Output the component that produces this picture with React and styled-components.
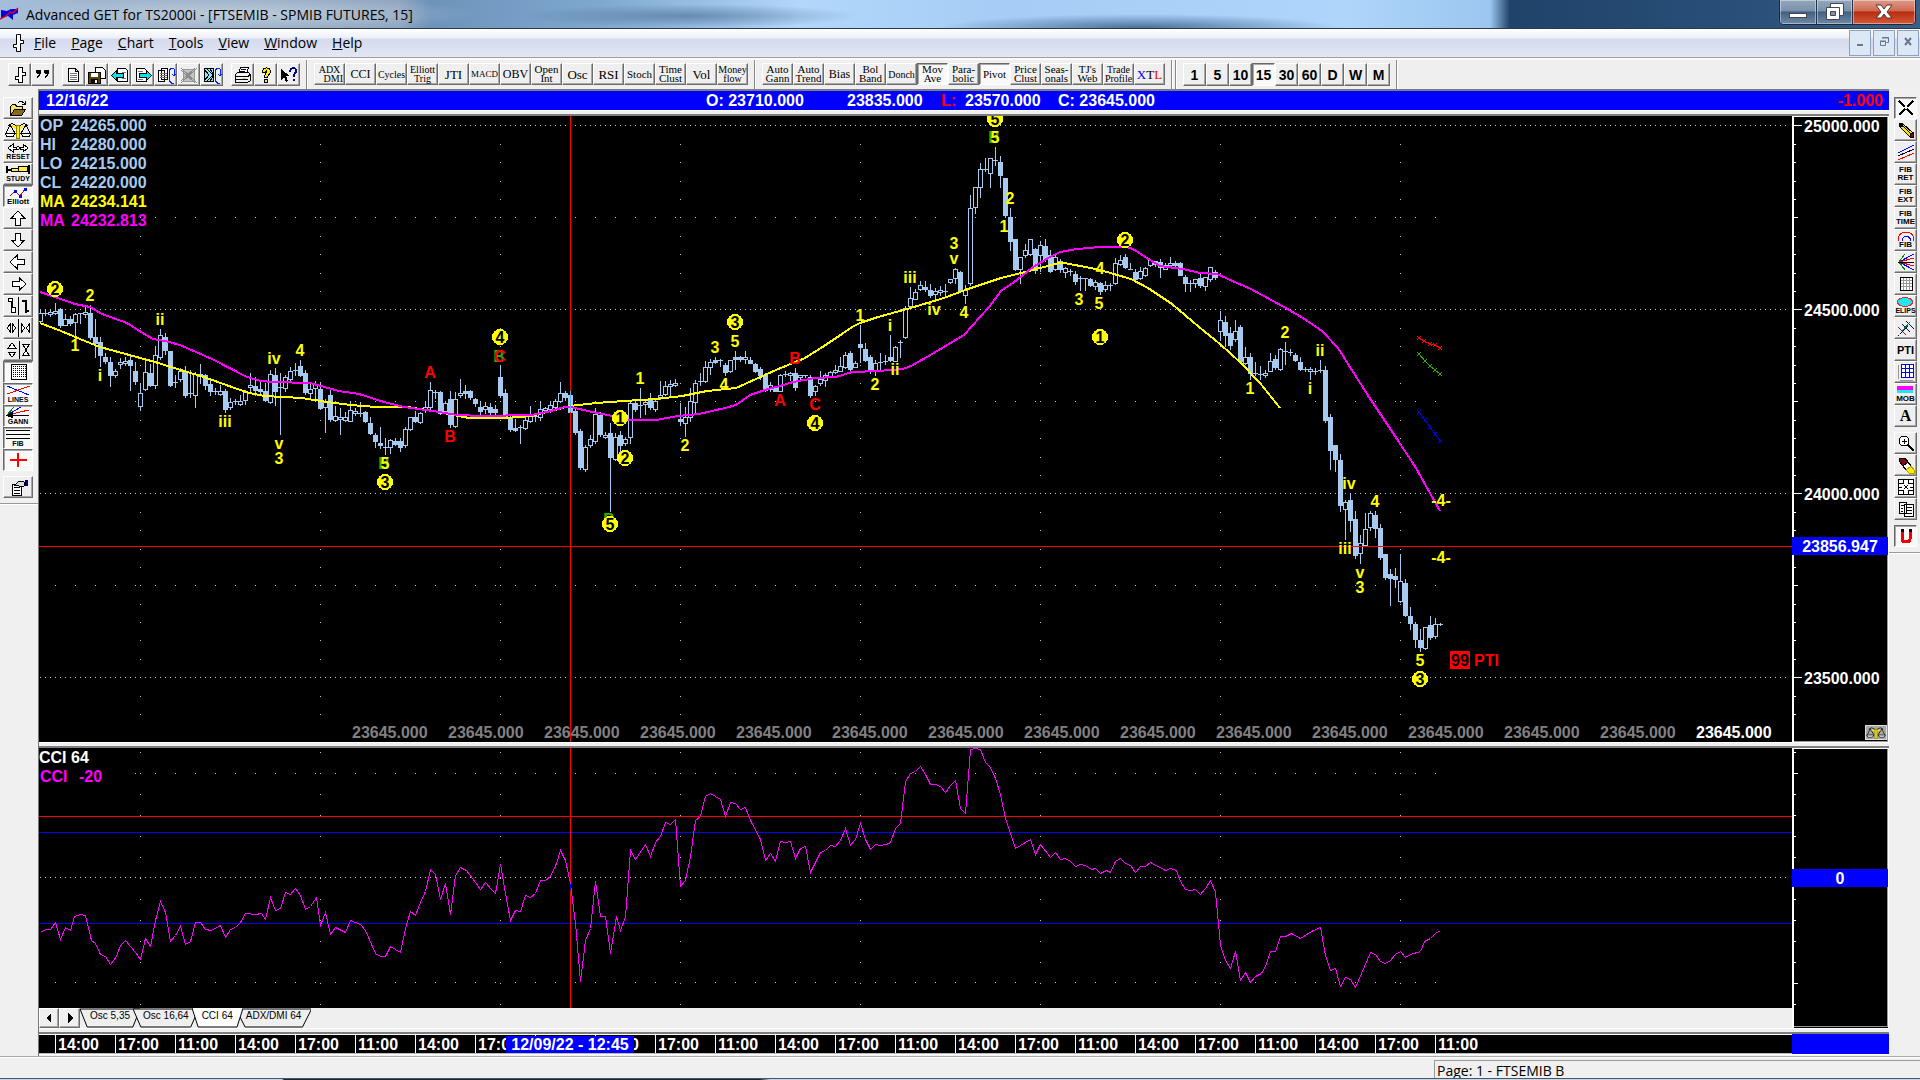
import React from "react";
import styled, { createGlobalStyle, css } from "styled-components";

const BAR_STEP = 5;
const FIRST_BAR = 40;

// [high, open, close, low] per bar, in thirds of a pixel below y = 240
const bars = [
  [208, 242, 220, 250], [210, 218, 222, 224], [210, 222, 216, 228], [188, 218, 214, 222],
  [205, 208, 256, 260], [222, 254, 236, 256], [228, 238, 250, 254], [220, 247, 222, 296],
  [218, 222, 220, 250], [202, 222, 216, 230], [196, 218, 290, 296], [238, 292, 310, 350],
  [292, 306, 346, 378], [338, 352, 362, 368], [350, 366, 406, 438], [388, 406, 392, 412],
  [354, 372, 366, 384], [352, 370, 362, 376], [346, 360, 374, 450], [366, 392, 424, 432],
  [428, 498, 458, 510], [360, 446, 396, 450], [372, 400, 434, 438], [318, 434, 346, 444],
  [268, 352, 286, 358], [280, 290, 330, 342], [332, 334, 434, 438], [404, 430, 426, 440],
  [384, 416, 394, 424], [378, 392, 466, 470], [390, 462, 458, 470], [396, 466, 402, 500],
  [372, 402, 408, 428], [402, 404, 434, 446], [414, 432, 452, 464], [444, 452, 456, 462],
  [436, 462, 454, 464], [446, 452, 506, 516], [474, 502, 486, 508], [478, 486, 484, 492],
  [466, 492, 484, 496], [450, 480, 456, 492], [400, 440, 434, 454], [412, 438, 450, 464],
  [424, 446, 454, 460], [430, 452, 480, 484], [390, 486, 402, 490], [384, 404, 454, 494],
  [400, 444, 442, 582], [404, 444, 412, 452], [380, 416, 394, 424], [368, 394, 390, 404],
  [360, 378, 404, 408], [390, 400, 456, 462], [432, 460, 446, 470], [424, 444, 432, 480],
  [426, 448, 504, 508], [476, 500, 484, 576], [450, 466, 536, 542], [498, 540, 528, 544],
  [504, 536, 530, 582], [516, 540, 532, 544], [484, 542, 510, 544], [504, 518, 512, 526],
  [486, 522, 518, 528], [512, 516, 542, 546], [530, 548, 578, 582], [580, 584, 604, 620],
  [560, 608, 616, 624], [594, 622, 620, 642], [598, 622, 600, 638], [594, 602, 612, 614],
  [594, 604, 620, 632], [560, 616, 566, 620], [530, 566, 532, 570], [512, 530, 542, 546],
  [516, 546, 518, 548], [484, 510, 500, 516], [426, 502, 450, 506], [450, 460, 456, 474],
  [452, 456, 518, 522], [482, 512, 490, 518], [452, 478, 552, 560], [456, 558, 476, 560],
  [416, 466, 460, 470], [436, 452, 458, 474], [450, 454, 472, 478], [474, 478, 490, 498],
  [484, 500, 512, 526], [486, 508, 498, 518], [488, 500, 516, 528], [494, 508, 516, 530],
  [378, 412, 466, 470], [448, 460, 528, 532], [526, 530, 566, 572], [536, 564, 570, 574],
  [554, 560, 560, 610], [532, 564, 540, 568], [498, 542, 526, 546], [524, 532, 528, 544],
  [484, 530, 506, 540], [500, 510, 504, 514], [484, 508, 496, 516], [478, 500, 482, 510],
  [426, 482, 458, 486], [452, 460, 470, 480], [450, 466, 516, 520], [505, 512, 576, 582],
  [568, 572, 682, 686], [614, 688, 622, 692], [586, 616, 598, 622], [504, 604, 522, 608],
  [516, 526, 582, 588], [576, 590, 584, 594], [548, 578, 650, 812], [578, 656, 590, 660],
  [574, 584, 616, 640], [590, 610, 596, 614], [484, 590, 488, 608], [482, 490, 506, 514],
  [444, 496, 498, 530], [482, 492, 486, 522], [460, 478, 500, 506], [474, 506, 484, 514],
  [424, 470, 466, 478], [422, 462, 438, 466], [420, 438, 432, 470], [416, 434, 430, 438],
  [488, 538, 542, 556], [500, 550, 532, 588], [444, 530, 484, 544], [420, 486, 428, 516],
  [398, 426, 424, 434], [364, 424, 380, 426], [358, 380, 366, 402], [352, 360, 366, 370],
  [358, 360, 362, 378], [370, 374, 396, 404], [360, 392, 360, 396], [334, 352, 356, 388],
  [348, 352, 358, 362], [334, 358, 352, 370], [350, 360, 368, 370], [368, 372, 392, 396],
  [382, 388, 404, 418], [400, 404, 450, 454], [426, 446, 434, 452], [438, 440, 452, 454],
  [402, 452, 406, 454], [394, 406, 402, 408], [396, 404, 400, 420], [384, 400, 440, 450],
  [404, 412, 406, 418], [404, 408, 404, 412], [406, 412, 466, 470], [434, 452, 438, 466],
  [392, 428, 418, 434], [398, 420, 406, 438], [392, 410, 396, 412], [376, 396, 390, 400],
  [350, 392, 378, 394], [336, 380, 344, 384], [334, 340, 386, 390], [362, 380, 368, 382],
  [255, 312, 322, 366], [310, 326, 360, 364], [344, 352, 386, 398], [360, 392, 368, 404],
  [340, 370, 366, 392], [346, 362, 362, 372], [286, 352, 360, 362], [318, 362, 320, 364],
  [300, 306, 308, 350], [198, 290, 204, 294], [140, 198, 174, 200], [148, 176, 156, 178],
  [123, 148, 136, 150], [124, 142, 148, 152], [132, 150, 164, 172], [144, 162, 154, 180],
  [138, 156, 150, 164], [133, 152, 153, 172], [116, 126, 118, 130], [84, 114, 86, 130],
  [94, 96, 152, 154], [136, 164, 150, 188], [-135, 130, -96, 134], [-158, -100, -158, -82],
  [-232, -160, -212, -130], [-246, -212, -212, -206], [-246, -200, -245, -158], [-280, -239, -238, -225],
  [-252, -234, -196, -160], [-187, -185, -74, -70], [-95, -69, 4, 30], [-4, -2, 86, 90],
  [50, 88, 52, 128], [12, 46, 30, 50], [-4, 42, -2, 44], [24, 26, 90, 100],
  [4, 44, 14, 94], [-2, 18, 58, 62], [30, 46, 92, 96], [38, 86, 52, 90],
  [58, 64, 88, 96], [82, 96, 84, 112], [88, 92, 96, 104], [92, 102, 124, 132],
  [108, 115, 116, 150], [113, 115, 116, 150], [114, 116, 134, 138], [120, 138, 126, 148],
  [125, 130, 152, 162], [124, 148, 136, 152], [130, 136, 136, 150], [54, 130, 70, 132],
  [46, 72, 60, 74], [42, 52, 82, 84], [68, 86, 86, 88], [88, 96, 118, 124],
  [82, 114, 92, 116], [80, 104, 84, 108], [56, 76, 60, 78], [62, 64, 72, 78],
  [58, 66, 80, 112], [70, 86, 76, 88], [52, 76, 70, 82], [64, 70, 74, 82],
  [66, 70, 104, 106], [106, 110, 130, 154], [120, 132, 130, 154], [116, 130, 118, 140],
  [102, 114, 134, 142], [110, 138, 110, 150], [82, 118, 82, 122], [90, 96, 110, 116],
  [212, 274, 240, 300], [228, 246, 286, 318], [260, 280, 314, 326], [240, 298, 274, 304],
  [256, 262, 364, 368], [322, 368, 350, 372], [340, 352, 400, 416], [365, 400, 400, 406],
  [378, 402, 402, 416], [390, 406, 400, 410], [340, 392, 362, 394], [344, 358, 382, 386],
  [324, 386, 328, 390], [306, 334, 336, 372], [328, 335, 338, 344], [340, 346, 360, 364],
  [352, 366, 386, 390], [382, 390, 386, 394], [382, 392, 388, 416], [384, 392, 395, 402],
  [360, 390, 392, 396], [378, 390, 540, 546], [522, 530, 630, 686], [615, 616, 656, 692],
  [642, 660, 794, 812], [780, 806, 786, 896], [760, 780, 840, 872], [812, 838, 944, 954],
  [884, 940, 910, 970], [820, 914, 866, 918], [812, 860, 820, 870], [812, 826, 864, 890],
  [852, 864, 952, 956], [941, 943, 1011, 1016], [986, 1003, 1013, 1095], [984, 1008, 1016, 1041],
  [942, 1082, 1024, 1086], [1017, 1028, 1124, 1127], [1101, 1129, 1148, 1166], [1146, 1151, 1196, 1221],
  [1168, 1200, 1221, 1232], [1161, 1223, 1161, 1226], [1128, 1155, 1191, 1198], [1134, 1189, 1152, 1193],
  [1150, 1153, 1153, 1156],
];

const fastAverage =
  "40,323 61,331 80,339 100,347 122,353 155,362 184,371 204,377 229,386 249,393 265,396 302,398 327,402 351,405 376,407 408,407 433,411 449,414 469,418 506,418 531,416 547,412 570,406 587,404 609,402 656,399 682,396 707,391 736,388 756,379 776,370 805,358 821,348 842,334 852,327 860,323 878,317 907,309 944,298 968,289 1001,278 1029,271 1059,263 1064,263 1091,268 1107,272 1131,279 1148,288 1172,304 1199,327 1220,344 1241,363 1260,383 1280,408";

const slowAverage =
  "40,292 55,297 75,304 90,307 102,314 127,323 141,332 153,339 165,341 180,345 212,359 247,377 261,381 273,382 310,383 339,391 359,394 384,402 404,407 433,411 457,415 482,416 531,415 547,412 565,407 571,407 592,412 608,415 629,420 656,420 678,416 699,414 725,408 736,405 750,395 768,389 780,386 793,382 815,378 836,377 852,372 878,371 903,369 911,366 927,357 964,335 972,326 989,307 1001,291 1017,280 1033,267 1050,257 1060,252 1077,249 1100,247 1127,247 1133,249 1150,260 1160,266 1183,269 1200,273 1217,274 1237,283 1251,289 1284,307 1303,318 1322,331 1338,348 1350,367 1369,397 1397,439 1416,468 1440,511";

const Y = "#ffff00";
const R = "#ff0000";
const G = "#2fae00";

// wave counts: [text, x, y, colour]
const waves = [
  ["2", 90, 295, Y], ["1", 75, 345, Y], ["i", 100, 375, Y], ["ii", 160, 319, Y],
  ["iii", 225, 421, Y], ["iv", 274, 358, Y], ["4", 300, 350, Y], ["v", 279, 443, Y],
  ["3", 279, 458, Y], ["B", 384, 463, G], ["5", 385, 463, Y], ["A", 430, 372, R],
  ["B", 450, 436, R], ["B", 499, 356, G], ["C", 500, 356, R], ["B", 609, 519, G],
  ["1", 640, 378, Y], ["2", 685, 445, Y], ["3", 715, 347, Y], ["4", 724, 384, Y],
  ["5", 735, 341, Y], ["A", 780, 400, R], ["B", 795, 358, R], ["C", 815, 404, R],
  ["1", 860, 315, Y], ["2", 875, 384, Y], ["i", 890, 325, Y], ["ii", 895, 369, Y],
  ["iii", 910, 277, Y], ["iv", 934, 309, Y], ["3", 954, 243, Y], ["v", 954, 258, Y],
  ["4", 964, 312, Y], ["B", 994, 137, G], ["5", 995, 137, Y], ["2", 1010, 198, Y],
  ["1", 1004, 226, Y], ["4", 1100, 268, Y], ["3", 1079, 299, Y], ["5", 1099, 303, Y],
  ["1", 1250, 388, Y], ["2", 1285, 332, Y], ["i", 1310, 388, Y], ["ii", 1320, 350, Y],
  ["iv", 1349, 483, Y], ["4", 1375, 501, Y], ["iii", 1345, 548, Y], ["v", 1360, 572, Y],
  ["3", 1360, 587, Y], ["-4-", 1441, 500, Y], ["-4-", 1441, 557, Y], ["5", 1420, 660, Y],
];

const majorWaves = [
  ["2", 55, 289], ["3", 385, 482], ["4", 500, 337], ["5", 610, 524], ["1", 620, 418],
  ["2", 625, 458], ["3", 735, 322], ["4", 815, 423], ["5", 995, 119], ["2", 1125, 240],
  ["1", 1100, 337], ["3", 1420, 679],
];

// oscillator line, each stretch with its own origin and units per pixel
const cci = [
  {
    x: 0, y: 720, sx: 2.24, sy: 3,
    points: [
      93, 635, 104, 629, 114, 627, 125, 607, 136, 658, 147, 623, 159, 632, 168, 588, 180, 583, 191, 587, 204, 660,
      214, 670, 226, 703, 237, 708, 248, 734, 260, 708, 271, 676, 281, 661, 303, 696, 315, 718, 326, 655, 337, 678,
      348, 600, 360, 544, 371, 578, 383, 663, 394, 645, 405, 619, 416, 672, 427, 665, 439, 607, 449, 607, 461, 628,
      474, 632, 494, 617, 506, 652, 516, 627, 528, 622, 539, 607, 550, 580, 573, 583, 585, 581, 595, 598, 607, 532,
      618, 571, 629, 565, 640, 517, 651, 523, 662, 506, 674, 525, 685, 568, 696, 558, 708, 533, 718, 615, 729, 578,
      741, 642, 752, 622, 774, 637, 785, 600, 808, 613, 819, 630, 841, 700, 852, 709, 864, 709, 875, 680, 897, 696,
      908, 625, 920, 575, 931, 585, 942, 546, 953, 513, 965, 449, 976, 464, 987, 538, 999, 490, 1010, 583,
      1020, 466, 1032, 441, 1044, 450, 1066, 488, 1077, 508, 1088, 487, 1100, 508, 1110, 520, 1121, 433,
      1132, 520, 1144, 602, 1155, 570, 1166, 574, 1177, 526, 1189, 532, 1200, 520, 1211, 482, 1223, 481,
      1234, 470, 1246, 430, 1256, 390, 1267, 420, 1278, 490, 1290, 610, 1301, 785, 1312, 660, 1323, 625,
      1334, 485, 1346, 588, 1357, 588, 1368, 700, 1380, 588, 1391, 632, 1401, 588, 1412, 390, 1424, 418,
      1446, 374, 1457, 409, 1468, 368, 1480, 350, 1491, 308, 1503, 313, 1513, 298, 1524, 498, 1536, 480,
      1547, 410, 1558, 302,
    ],
  },
  {
    x: 700, y: 720, sx: 2.529, sy: 3,
    points: [
      2, 288, 14, 228, 26, 221, 40, 228, 53, 237, 65, 288, 78, 247, 90, 251, 103, 268, 115, 263, 128, 300, 152, 357,
      166, 422, 179, 401, 191, 423, 203, 364, 215, 368, 229, 364, 242, 415, 254, 385, 267, 379, 280, 457, 305, 397,
      318, 390, 331, 377, 343, 380, 356, 360, 369, 325, 381, 376, 394, 357, 406, 311, 419, 358, 432, 387, 445, 374,
      457, 377, 471, 374, 482, 367, 495, 325, 507, 311, 519, 185, 532, 160, 546, 153, 558, 139, 570, 162, 582, 193,
      596, 193, 608, 200, 621, 217, 634, 196, 646, 182, 658, 264, 672, 281, 684, 88, 697, 86, 710, 89, 722, 128,
      735, 143, 747, 175, 760, 222, 773, 296, 798, 386, 811, 375, 836, 359, 849, 403, 861, 372, 886, 412, 900, 398,
      912, 418, 924, 415, 937, 423, 950, 440, 963, 433, 975, 436, 989, 448, 1000, 446, 1013, 460, 1027, 451,
      1038, 458, 1051, 423, 1064, 415, 1076, 430, 1089, 437, 1102, 458, 1114, 440, 1126, 439, 1140, 428,
      1178, 452, 1191, 444, 1204, 452, 1216, 485, 1228, 508, 1240, 512, 1253, 509, 1267, 523, 1279, 504,
      1291, 482, 1304, 517, 1311, 610, 1317, 675, 1329, 720, 1342, 745, 1354, 694, 1368, 782, 1380, 757,
      1392, 787, 1405, 768, 1419, 760, 1431, 740, 1443, 695, 1456, 693, 1468, 650, 1480, 649,
    ],
  },
  {
    x: 1280, y: 520, sx: 2.45, sy: 2.8,
    points: [
      27, 1157, 50, 1171, 78, 1153, 99, 1142, 111, 1220, 124, 1262, 136, 1255, 149, 1306, 160, 1280, 173, 1287,
      185, 1308, 222, 1211, 234, 1216, 246, 1235, 258, 1242, 270, 1232, 283, 1216, 295, 1209, 307, 1224, 319, 1217,
      343, 1207, 355, 1179, 368, 1173, 380, 1158, 393, 1149,
    ],
  },
];

const cciLine = cci
  .map(({ x, y, sx, sy, points }) => {
    const out = [];
    for (let i = 0; i < points.length; i += 2) {
      out.push(`${Math.floor(x + points[i] / sx) + 0.5},${Math.floor(y + points[i + 1] / sy) + 0.5}`);
    }
    return out.join(" ");
  })
  .join(" ");

const range = (n) => Array.from({ length: n }, (_, i) => i);
const priceTick = (k) => Math.round(125.3 + k * 18.4);
const cciTick = (k) => 752 + k * 21;
const sessions = range(8).map((i) => 140 + i * 180);
const hours = ["14:00", "17:00", "11:00"];

const GlobalStyle = createGlobalStyle`
  body {
    margin: 0;
    background: #f0f0f0;
    font-family: "Liberation Sans", Arial, sans-serif;
    overflow: hidden;
  }
  button {
    font: inherit;
    color: #000;
  }
`;

const Window = styled.div`
  display: flex;
  flex-direction: column;
  min-height: 100vh;
`;

const TitleBar = styled.header`
  display: flex;
  align-items: flex-start;
  height: 28px;
  border-bottom: 1px solid #2a3a4c;
  background:
    radial-gradient(ellipse 170px 12px at 690px 16px, rgba(66, 98, 132, 0.55), transparent),
    radial-gradient(ellipse 200px 14px at 1140px 28px, rgba(40, 80, 124, 0.75), transparent),
    radial-gradient(ellipse 240px 18px at 240px 14px, rgba(214, 224, 234, 0.6), transparent),
    linear-gradient(90deg, #a4bedb 0, #9db4cc 100px, #8fa6bf 400px, #6d93ba 430px, #7fa8d0 600px, #b2d7fb 800px,
      #a5cdf5 1000px, #aed5fa 1350px, #9cc6f0 1490px, #1f4369 1510px, #2a507a 1750px, #3b6086 100%);
`;

const AppIcon = styled.svg`
  width: 20px;
  height: 20px;
  margin-top: 4px;
`;

const Title = styled.h1`
  flex: 1;
  margin: 0 0 0 6px;
  font: 400 14px/29px "Open Sans", "Noto Sans", sans-serif;
  white-space: nowrap;
`;

const WindowButtons = styled.div`
  display: flex;
  height: 24px;
  margin-right: 4px;
  border: 1px solid #1b2a3a;
  border-top: 0;
  border-radius: 0 0 5px 5px;
  overflow: hidden;
`;

const WindowButton = styled.button`
  width: ${(p) => p.$width}px;
  padding: 0;
  border: 0;
  border-right: 1px solid #22344a;
  box-shadow: inset 0 0 0 1px rgba(255, 255, 255, 0.4);
  background: ${(p) =>
    p.$close
      ? "linear-gradient(#dc9a8a 0, #cf6a50 45%, #b82c10 50%, #d4593a 100%)"
      : "linear-gradient(#93a7bc 0, #7b92aa 45%, #43607f 50%, #6f8aa6 100%)"};
  &:last-child {
    border-right: 0;
  }
`;

const MenuBar = styled.nav`
  display: flex;
  align-items: center;
  height: 29px;
  padding-left: 10px;
  border-bottom: 1px solid #a0a0a0;
  box-sizing: border-box;
  background: linear-gradient(#ffffff 0, #eef0f8 9px, #d4daed 10px, #e3e8f5 100%);
`;

const MenuButton = styled.button`
  margin-right: 15px;
  padding: 0;
  border: 0;
  background: none;
  font: 400 14px/28px "Open Sans", "Noto Sans", sans-serif;
  &::first-letter {
    text-decoration: underline;
  }
`;

const MenuIcon = styled.svg`
  width: 16px;
  height: 20px;
  margin-right: 8px;
`;

const DocumentButtons = styled.div`
  display: flex;
  gap: 2px;
  margin: 0 1px 0 auto;
`;

const DocumentButton = styled.button`
  width: 22px;
  height: 26px;
  padding: 0;
  border: 1px solid #8ea2bd;
  background: #dce8f6;
`;

const Toolbars = styled.div`
  display: flex;
  align-items: flex-start;
  height: 31px;
  box-sizing: border-box;
  padding: 3px 0 0 8px;
  border-top: 2px solid #fafafa;
  background: #efefef;
`;

const ButtonGroup = styled.div`
  display: flex;
  margin-right: ${(p) => p.$after || 8}px;
`;

const Divider = styled.span`
  width: 1px;
  height: 29px;
  margin: -3px ${(p) => p.$after || 6}px 0 0;
  border-left: 1px solid #888;
  background: #fff;
`;

const raised = css`
  border: 1px solid;
  border-color: #fff #6d6d6d #6d6d6d #fff;
  box-shadow: inset -1px -1px #a8a8a8;
  background: #efefef;
`;

const sunken = css`
  border: 1px solid;
  border-color: #696969 #fff #fff #696969;
  box-shadow: inset 1px 1px #a8a8a8;
  background: #f9f9f9;
`;

const ToolButton = styled.button`
  display: flex;
  align-items: center;
  justify-content: center;
  width: ${(p) => p.$width || 23}px;
  height: ${(p) => p.$height || 23}px;
  padding: 0;
  box-sizing: border-box;
  overflow: hidden;
  ${(p) => (p.$pressed ? sunken : raised)}
  svg {
    flex: none;
    shape-rendering: crispEdges;
  }
`;

const StudyText = styled.span`
  font-family: "Liberation Serif", "Times New Roman", serif;
  font-size: ${(p) => p.$size}px;
  line-height: 9px;
  text-align: center;
  white-space: pre;
`;

const PlainText = styled.span`
  font-size: ${(p) => p.$size}px;
  font-weight: ${(p) => (p.$bold ? 700 : 400)};
  line-height: 8px;
  text-align: center;
  white-space: pre;
`;

const Tint = styled.span`
  color: ${(p) => p.$color};
`;

const Workspace = styled.main`
  display: flex;
  flex: 1;
`;

const SideTools = styled.aside`
  display: flex;
  flex: none;
  flex-direction: column;
  box-sizing: border-box;
  width: ${(p) => p.$width}px;
  padding: 8px 0 0 ${(p) => p.$inset}px;
`;

const SideGroup = styled.div`
  display: flex;
  flex-direction: column;
  margin-bottom: 5px;
`;

const SideEnd = styled.div`
  height: 1px;
  margin-left: -5px;
  border-top: 1px solid #999;
  background: #fff;
`;

const Charts = styled.section`
  display: flex;
  flex: 1;
  flex-direction: column;
  min-width: 0;
  border-left: 1px solid #777;
`;

const Pane = styled.div`
  display: flex;
  margin-bottom: ${(p) => (p.$last ? 2 : 4)}px;
  border-top: 2px solid #7d7d7d;
  box-shadow: 0 1px #fff;
`;

const QuoteBar = styled.div`
  display: grid;
  flex: 1;
  grid-template-columns: 660px 141px 94px 117px 1fr auto;
  height: 19px;
  padding: 0 6px 0 7px;
  background: #0000ff;
  color: #fff;
  font: 700 16px/19px "Liberation Sans", Arial, sans-serif;
`;

const QuoteValue = styled.span`
  white-space: pre;
`;

const PlotColumn = styled.div`
  flex: 1;
  min-width: 0;
`;

const Plot = styled.svg`
  display: block;
  width: 100%;
  height: ${(p) => p.$height}px;
  background: #000;
  font: 700 16px "Liberation Sans", Arial, sans-serif;
  shape-rendering: crispEdges;
`;

const Axis = styled.div`
  position: relative;
  flex: none;
  width: 97px;
  box-sizing: border-box;
  border-right: 1px solid #fff;
  background: #000;
`;

const AxisBadge = styled.output`
  position: absolute;
  top: ${(p) => p.$top}px;
  left: 0;
  right: 0;
  height: 18px;
  background: #0000ff;
  color: #fff;
  font: 700 16px/19px "Liberation Sans", Arial, sans-serif;
  text-align: center;
`;

const ScaleButton = styled.button`
  position: absolute;
  right: 1px;
  bottom: 2px;
  width: 22px;
  height: 15px;
  padding: 0;
  border: 1px solid #ddd;
  background: #a8a8a8;
  svg {
    display: block;
  }
`;

const TabStrip = styled.div`
  display: flex;
  height: 20px;
  background: #efefef;
`;

const Tab = styled.button`
  position: relative;
  z-index: ${(p) => (p.$active ? 1 : 0)};
  height: 20px;
  margin-right: -7px;
  padding: 0 10px 5px;
  border: 0;
  background: none;
  font-size: 10px;
  line-height: 14px;
  white-space: nowrap;
  svg {
    position: absolute;
    inset: 0;
    z-index: -1;
    width: 100%;
    height: 100%;
  }
`;

const TimeAxis = styled.div`
  position: relative;
  display: flex;
  flex: 1;
  min-width: 0;
  height: 20px;
  box-sizing: border-box;
  padding-left: 16px;
  border-top: 1px solid #fff;
  border-bottom: 1px solid #bbb;
  background: #000;
  overflow: hidden;
`;

const Hour = styled.span`
  flex: none;
  width: 60px;
  box-sizing: border-box;
  padding-left: 2px;
  border-left: 1px solid #fff;
  color: #fff;
  font: 700 16px/20px "Liberation Sans", Arial, sans-serif;
`;

const CursorTime = styled.output`
  position: absolute;
  left: 467px;
  top: 1px;
  width: 128px;
  background: #0000ff;
  color: #fff;
  font: 700 16px/18px "Liberation Sans", Arial, sans-serif;
  text-align: center;
`;

const Corner = styled.div`
  flex: none;
  width: 97px;
  background: #0000ff;
`;

const StatusBar = styled.footer`
  display: flex;
  height: 22px;
  box-sizing: border-box;
  padding-top: 3px;
  border-top: 1px solid #a8a8a8;
  box-shadow: inset 0 1px #fff;
`;

const StatusCell = styled.span`
  width: 486px;
  margin-left: auto;
  padding-left: 2px;
  border-left: 1px solid #999;
  border-top: 1px solid #999;
  box-sizing: border-box;
  font: 400 14px/20px "Open Sans", "Noto Sans", sans-serif;
`;

const TaskEdge = styled.div`
  height: 2px;
  background: linear-gradient(90deg, #c6d8e8 0, #c6d8e8 282px, #1b2530 284px, #1b2530 760px, #c6d8e8 770px);
  border-top: 1px solid #43586d;
  box-sizing: border-box;
`;

const Stack = styled.span`
  display: flex;
  flex-direction: column;
  align-items: center;
`;

const Letter = styled.span`
  font: 700 16px/18px "Liberation Serif", "Times New Roman", serif;
`;

const Icon = ({ w = 20, h = 18, children }) => (
  <svg width={w} height={h} viewBox={`0 0 ${w} ${h}`} fill="none" stroke="#000" aria-hidden="true">
    {children}
  </svg>
);

const icons = {
  bar: <path d="M9.500 1.500h3v5h3v3h-3v7h-4v-3h-3v-3h3v-9z" fill="#fff" />,
  quotes: (
    <path
      d="M3 6a2.500 2.500 0 1 1 5 0c0 3-2 5-4 6v-1c1-1 2-2 2-3a2.500 2.500 0 0 1-3-2zM11 6a2.500 2.500 0 1 1 5 0c0 3-2 5-4 6v-1c1-1 2-2 2-3a2.500 2.500 0 0 1-3-2z"
      fill="#000"
      stroke="none"
    />
  ),
  page: (
    <>
      <path d="M4.500 2.500h7l3 3v10h-10z M11.500 2.500v3h3" fill="#fff" />
      <path d="M6 7.500h7M6 9.500h7M6 11.500h7M6 13.500h7" stroke="#777" />
    </>
  ),
  save: (
    <>
      <path d="M8.500 1.500h7l3 3v8h-10z" fill="#fff" />
      <path d="M1.500 6.500h12v11h-12z" fill="#5a4300" />
      <path d="M4 7h7v4H4z" fill="#fff" stroke="none" />
      <path d="M4 13h7v4H4z" fill="#000" stroke="none" />
      <path d="M8 14h2v3H8z" fill="#fff" stroke="none" />
    </>
  ),
  prev: (
    <>
      <path d="M7.500 2.500h8l2 2v11h-10z" fill="#fff" />
      <path d="M12 6.500h4M12 12.500h4" stroke="#777" />
      <path d="M1.500 9.500l5-5v3h7v4h-7v3z" fill="#00e5ee" />
    </>
  ),
  next: (
    <>
      <path d="M3.500 2.500h8l2 2v11h-10z" fill="#fff" />
      <path d="M5 5.500h5M5 13.500h5" stroke="#777" />
      <path d="M18.500 9.500l-5-5v3h-7v4h7v3z" fill="#00e5ee" />
    </>
  ),
  cycle: (
    <>
      <path d="M2.500 4.500h6v11h-6zM5.500 2.500h6v11h-6z" fill="#fff" />
      <path d="M4 7.500h7M4 9.500h7M4 11.500h7" stroke="#777" />
      <path d="M13.500 15V4l2-2h2l1 2v5M16 8l2 2 2-2M13.500 15l2 2h2" stroke="#0022ee" />
    </>
  ),
  remove: (
    <>
      <path d="M4.500 3.500h11v12h-11z" stroke="#999" fill="#c4c4c4" />
      <path d="M2 2l16 15M18 2L2 17M2 4l14 13M16 2L2 15" stroke="#8c8c8c" />
    </>
  ),
  cycleAll: (
    <>
      <path d="M2.500 2.500h9v13h-9z" fill="#90e8f0" />
      <path d="M2 3l5 6-5 6M5 3l6 6-6 6M8 3l4 6-4 6" />
      <path d="M13.500 15V4l2-2h2l1 2v5M16 8l2 2 2-2M13.500 15l2 2h2" stroke="#0022ee" />
    </>
  ),
  print: (
    <>
      <path d="M5.500 7.500l2-6h8l-2 6z" fill="#fff" />
      <path d="M8 3.500h5M7 5.500h5" />
      <path d="M2.500 8.500l2-2h11l2 2v6l-3 2h-12z" fill="#f2f2f2" />
      <path d="M3 10.500h12M3 13.500h12M15 10.500l2-2" />
      <path d="M10 12h3" stroke="#e0d000" />
    </>
  ),
  help: (
    <>
      <path d="M6.500 6.500c-1-6 8-6 8-1 0 3-3 3-3 6h-3c0-4 2-4 2-6 0-1-1-1-1 1z" fill="#ffee00" />
      <path d="M8.500 13.500h3v3h-3z" fill="#ffee00" />
    </>
  ),
  pointer: (
    <>
      <path d="M2 3v11l3-3 2 5 2-1-2-5h4z" fill="#000" stroke="none" />
      <path d="M11.500 6c-1-5 6-5 6-1 0 2-3 2-3 6M14.500 13v2" stroke="#00008b" strokeWidth="2" />
    </>
  ),
};

const sideIcons = {
  open: (
    <>
      <path d="M4.500 16.500v-9l2-2h3l1 2h6v3" fill="#f4e36a" />
      <path d="M4.500 16.500l4-6h11l-4 6z" fill="#8a6a1c" />
      <path d="M12 4c3-3 5-1 7 1M19 2v3h-3" />
    </>
  ),
  scales: (
    <>
      <path d="M3 4.500l4-2 6 3 6-3 4 2" />
      <path d="M5 4l-4 8M5 4l5 8M21 4l-5 8M21 4l4 8M0 12.500h10l-2 3H2zM16 12.500h10l-2 3h-6z" fill="#fff" />
      <path d="M7 5l6 3 6-3" stroke="#ffee00" strokeWidth="2" />
      <path d="M11.500 4.500h3v13h-3z" fill="#ffee00" stroke="#8a8000" />
    </>
  ),
  reset: <path d="M2 5l5-4v3h3v2H7v3zM22 5l-5-4v3h-3v2h3v3zM10 5l2-2 2 2-2 2z" fill="#fff" />,
  study: (
    <>
      <path d="M1 1v7M1 4.500h7M23 0v9" strokeWidth="2" />
      <path d="M5.500 3.500h7v3h-7zM12.500 1.500h9v5h-9z" fill="#ffee44" />
    </>
  ),
  elliott: (
    <>
      <path d="M4 9l5-5 5 5 6-8" stroke="#e00000" />
      <path d="M8 3h2v2H8zM13 8h2v2h-2zM18 1h2v2h-2z" fill="#0000ff" stroke="#0000ff" />
    </>
  ),
  up: <path d="M12 2l6.500 7h-4v7h-5V9h-4z" fill="#fff" />,
  down: <path d="M12 16l6.500-7h-4V2h-5v7h-4z" fill="#fff" />,
  left: <path d="M4 9l7-6.500v4h7v5h-7v4z" fill="#fff" />,
  right: <path d="M20 9l-7-6.500v4H6v5h7v4z" fill="#fff" />,
  space: (
    <>
      <path d="M2.500 3.500v-2h4v9h3v5h-4v-11h-3zM12.500 0v18" fill="#fff" />
      <path d="M19.500 3v13M16 4h3M20 14h3" strokeWidth="2" />
    </>
  ),
  narrow: <path d="M1 9l3.500-4v8zM10 9L6.500 5v8zM12.500 0v18M15.500 5v8l3.500-4zM23.500 5v8L20 9z" fill="#fff" />,
  shorten: (
    <path d="M2 7l4-5 4 5zM2 11l4 5 4-5zM13.500 0v18M16.500 3.500h7l-3.500 5zM16.500 14.500h7l-3.500-5z" fill="#fff" />
  ),
  grid: (
    <>
      <path d="M5.500 1.500h15v15h-15z" fill="#fff" />
      {range(6).map((i) => (
        <path key={i} d={`M7 ${3.5 + i * 2}h13`} strokeDasharray="1 1" />
      ))}
    </>
  ),
  lines: (
    <>
      <path d="M1 9L24 1" stroke="#ff0000" />
      <path d="M1 1l22 9" stroke="#0000ff" />
    </>
  ),
  gann: (
    <>
      <path d="M1 9L8 1" stroke="#008000" />
      <path d="M1 9l14-8" stroke="#0000ff" />
      <path d="M1 9l22-5" stroke="#ff0000" />
      <path d="M1 9.500h22M1 9.500l5-3v5z" fill="#000" />
    </>
  ),
  fib: <path d="M0 1.500h24M0 5.500h24M0 9.500h24" />,
  cross: <path d="M12 2v14M4 9h17" stroke="#ff0000" strokeWidth="2" />,
  props: (
    <>
      <path d="M6.500 6.500h9v11h-9z" fill="#fff" />
      <path d="M8 9.500h6M8 12.500h6M8 15.500h6" />
      <path d="M9 7l4-4 5 1v4l-4 1-2-2z" fill="#ddd" />
      <path d="M20 2v6" stroke="#00008b" strokeWidth="3" />
    </>
  ),
};

const rightIcons = {
  cross: <path d="M2 2l6 6M10 10l6 6M16 2l-6 6M8 10l-6 6" strokeWidth="2" />,
  pencil: (
    <>
      <path d="M2 2l3 0 11 10-3 4L2 5z" fill="#ffe600" />
      <path d="M2 2h3v3H2z" fill="#000" />
      <path d="M13 13l3-1v4h-3z" fill="#a00000" />
      <path d="M5 4l9 9" />
    </>
  ),
  channel: (
    <>
      <path d="M1 10L17 2" stroke="#0000ff" />
      <path d="M1 13L17 6" />
      <path d="M1 17l16-7" stroke="#ff0000" />
    </>
  ),
  arcs: (
    <>
      <path d="M3 13C-2 4 5 1 9 1s11 3 6 12" stroke="#ff0000" />
      <path d="M5 10c0-6 8-6 9 0" stroke="#0000ff" />
    </>
  ),
  fan: (
    <>
      <path d="M2 9L8 1M2 9l6 8" stroke="#008000" />
      <path d="M2 9L17 1M2 9l15 8" stroke="#0000ff" />
      <path d="M2 9l15-4M2 9l15 4" stroke="#ff0000" />
      <path d="M1 9.500h16" />
    </>
  ),
  grid: (
    <>
      <path d="M3.500 2.500h12v13h-12z" fill="#fff" />
      <path d="M6.500 3v12M9.500 3v12M12.500 3v12M4 5.500h11M4 8.500h11M4 11.500h11" stroke="#999" />
    </>
  ),
  ellipse: <ellipse cx="9" cy="5" rx="7.500" ry="4.500" fill="#22e6f0" stroke="#e03030" />,
  pitchfork: (
    <>
      <path d="M5 5l8 8M9 2l8 8" stroke="#00007b" />
      <path d="M1 8l8 8" stroke="#8b1a1a" />
      <path d="M5 12l8-9" stroke="#008000" />
      <path d="M1 17L12 6" stroke="#00007b" strokeDasharray="2 1" />
    </>
  ),
  table: (
    <>
      <path d="M4.500 1.500h12v13h-12zM8.500 2v12M12.500 2v12M5 5.500h11M5 9.500h11" fill="#fff" stroke="#0000ff" />
      <path d="M1.500 2v14M3 17.500h13" stroke="#999" />
    </>
  ),
  zoom: (
    <>
      <circle cx="7" cy="7" r="5" fill="#fff" />
      <path d="M4.500 7h5M7 4.500v5" />
      <path d="M11 11l6 6" strokeWidth="2" />
    </>
  ),
  eraser: (
    <>
      <path d="M3 2h5l3 4-5 4-4-5z" fill="#7a1010" />
      <path d="M11 6l3 4-5 4-3-4z" fill="#fff" />
      <path d="M14 10l3 4v3h-5l-3-3z" fill="#ffee00" stroke="#aaa000" />
    </>
  ),
  shrink: (
    <path
      d="M1.500 1.500h15v15h-15zM2 5l4 1 1-4M16 5l-4 1-1-4M2 13l4-1 1 4M16 13l-4-1-1 4M7 7l4 4M11 7l-4 4M2 9h3M13 9h3"
      fill="#fff"
    />
  ),
  copy: (
    <path
      d="M2.500 2.500h7v11h-7zM7.500 4.500h9v12h-9zM9 8l3-1 3 1M9 11l3-1 3 1M9 14l3-1 3 1M4 5h3M4 8h2M4 11h2"
      fill="#fff"
    />
  ),
  magnet: (
    <>
      <path d="M5 5v7c0 4 8 4 8 0V5" stroke="#f00000" strokeWidth="3" />
      <path d="M5 2v3M13 2v3" strokeWidth="3" />
    </>
  ),
};

const studies = [
  ["ADX\n   DMI", 10], ["CCI", 12], ["Cycles", 10], ["Elliott\nTrig", 10], ["JTI", 13], ["MACD", 9], ["OBV", 12],
  ["Open\nInt", 11], ["Osc", 13], ["RSI", 13], ["Stoch", 11], ["Time\nClust", 11], ["Vol", 13], ["Money\nflow", 10],
];

const tools = [
  ["Auto\nGann", 11], ["Auto\nTrend", 11], ["Bias", 12], ["Bol\nBand", 11], ["Donch", 10], ["Mov\nAve", 11, true],
  ["Para-\nbolic", 11], ["Pivot", 11, true], ["Price\nClust", 11], ["Seas-\nonals", 11], ["TJ's\nWeb", 11],
  ["Trade\nProfile", 10],
];

const periods = ["1", "5", "10", "15", "30", "60", "D", "W", "M"];

const IconButtons = ({ names, after }) => (
  <ButtonGroup $after={after}>
    {names.map((name) => (
      <ToolButton key={name} aria-label={name}>
        <Icon>{icons[name]}</Icon>
      </ToolButton>
    ))}
  </ButtonGroup>
);

const StudyButtons = ({ items, children }) => (
  <ButtonGroup $after={6}>
    {items.map(([label, size, pressed]) => (
      <ToolButton key={label} $width={31} $height={22} $pressed={pressed}>
        <StudyText $size={size}>{label}</StudyText>
      </ToolButton>
    ))}
    {children}
  </ButtonGroup>
);

const SideButton = ({ icon, set, label, size = 8, bold = true, h = 18, w = 25, pressed, width = 30 }) => (
  <ToolButton $width={width} $height={22} $pressed={pressed} aria-label={icon || label}>
    <Stack>
      {icon && <Icon w={w} h={h}>{set[icon]}</Icon>}
      {label && <PlainText $size={size} $bold={bold}>{label}</PlainText>}
    </Stack>
  </ToolButton>
);

const Candle = ({ bar, x }) => {
  const [high, open, close, low] = bar.map((v) => 240 + Math.round(v / 3));
  const top = Math.min(open, close);
  const size = Math.abs(close - open);
  const color = "#a6caf0";
  return (
    <g>
      <path d={`M${x + 0.5} ${high}V${low + 1}`} stroke={color} />
      {size < 2 ? (
        <path d={`M${x - 2} ${top + 0.5}h5`} stroke={color} />
      ) : (
        <rect x={x - 1.5} y={top + 0.5} width="4" height={size} stroke={color} fill={close > open ? color : "#000"} />
      )}
    </g>
  );
};

const Projection = ({ points, color }) => (
  <g stroke={color} fill="none">
    <polyline points={points.map((p) => p.join(",")).join(" ")} />
    {points.map(([x, y]) => (
      <path key={x} d={`M${x - 2} ${y - 2}l4 4M${x + 2} ${y - 2}l-4 4`} />
    ))}
  </g>
);

const PriceChart = () => (
  <Plot $height={626} role="img" aria-label="Price chart">
    <g transform="translate(-39 -116)">
      {[0, 10, 20, 30].map((k) => (
        <path key={k} d={`M${k ? 40 : 155} ${priceTick(k) + 0.5}H1788`} stroke="#c0c0c0" strokeDasharray="1 4" />
      ))}
      {[5, 15, 25].map((k) => (
        <path key={k} d={`M${k === 5 ? 155 : 55} ${priceTick(k) + 0.5}H1440`} stroke="#c0c0c0" strokeDasharray="1 19" />
      ))}
      {sessions.map((x) =>
        range(32).map((k) =>
          x < 150 && k < 4 ? null : (
            <rect key={x + "-" + k} x={x} y={priceTick(k + 1)} width="1" height="1" fill="#c0c0c0" />
          )
        )
      )}
      {bars.map((bar, i) => (
        <Candle key={i} bar={bar} x={FIRST_BAR + i * BAR_STEP} />
      ))}
      <polyline points={fastAverage} fill="none" stroke={Y} strokeWidth="2" />
      <polyline points={slowAverage} fill="none" stroke="#ff00ff" strokeWidth="2" />
      <path d="M570.500 116V742M39 546.500H2400" stroke={R} />
      <path d="M570.500 391V412" stroke="#58b0ff" />
      <Projection color={R} points={[[1419, 338], [1424, 341], [1430, 344], [1435, 345], [1440, 348]]} />
      <Projection color={G} points={[[1419, 354], [1425, 361], [1430, 366], [1435, 370], [1440, 374]]} />
      <Projection color="#0000ff" points={[[1419, 412], [1425, 420], [1430, 427], [1435, 434], [1440, 441]]} />
      <g textAnchor="middle">
        {waves.map(([text, x, y, color], i) => (
          <text key={i} x={x} y={y + 6} fill={color}>{text}</text>
        ))}
        {majorWaves.map(([text, x, y], i) => (
          <g key={i}>
            <circle cx={x} cy={y} r="8" fill={Y} />
            <text x={x} y={y + 6} fill="#000">{text}</text>
          </g>
        ))}
      </g>
      <rect x="1450" y="651" width="20" height="18" fill={R} />
      <text x="1451" y="666" fill="#000">99</text>
      <text x="1474" y="666" fill={R}>PTI</text>
      {range(15).map((i) => (
        <text key={i} x={352 + i * 96} y="738" fill={i === 14 ? "#fff" : "#808080"}>23645.000</text>
      ))}
      {[
        ["OP", "24265.000", "#a6caf0"], ["HI", "24280.000", "#a6caf0"], ["LO", "24215.000", "#a6caf0"],
        ["CL", "24220.000", "#a6caf0"], ["MA", "24234.141", Y], ["MA", "24232.813", "#ff00ff"],
      ].map(([name, value, color], i) => (
        <g key={i} fill={color}>
          <text x="40" y={131 + i * 19}>{name}</text>
          <text x="71" y={131 + i * 19}>{value}</text>
        </g>
      ))}
    </g>
  </Plot>
);

const PriceAxis = () => (
  <Axis>
    <Plot $height={626} role="img" aria-label="Price scale">
      <g transform="translate(-1792 -116)" stroke="#fff">
        <path d="M1793 116V742" strokeWidth="2" />
        <path d="M1794 116.500H1888" />
        <path d="M1887.500 117V741.500H1794" stroke="#999" fill="none" />
        {range(33).map((k) => (
          <path key={k} d={`M1794 ${priceTick(k) + 0.5}h${k % 10 === 0 ? 8 : k % 5 === 0 ? 4 : 2}`} />
        ))}
        {["25000.000", "24500.000", "24000.000", "23500.000"].map((price, i) => (
          <text key={price} x="1804" y={132 + i * 184} fill="#fff" stroke="none">{price}</text>
        ))}
      </g>
    </Plot>
    <AxisBadge $top={421}>23856.947</AxisBadge>
    <ScaleButton aria-label="Scale">
      <svg width="20" height="13" viewBox="0 0 26 18" fill="none" stroke="#000">{sideIcons.scales}</svg>
    </ScaleButton>
  </Axis>
);

const CciChart = () => (
  <Plot $height={260} role="img" aria-label="CCI chart">
    <g transform="translate(-39 -748)">
      <path d="M40 877.500H1788" stroke="#c0c0c0" strokeDasharray="1 4" />
      <path d="M135 773.500H1440M55 982.500H1440" stroke="#c0c0c0" strokeDasharray="1 19" />
      {sessions.map((x) =>
        range(13).map((k) => <rect key={x + "-" + k} x={x} y={cciTick(k)} width="1" height="1" fill="#c0c0c0" />)
      )}
      <path d="M39 832.500H2400M39 923.500H2400" stroke="#0000ff" />
      <path d="M39 816.500H2400M570.500 748V1008" stroke={R} />
      <polyline points={cciLine} fill="none" stroke="#ff00ff" />
      <path d="M570.500 884V890" stroke="#0000ff" />
      <text x="39" y="763" fill="#fff">CCI 64</text>
      <text x="40" y="782" fill="#ff00ff">CCI</text>
      <text x="79" y="782" fill="#ff00ff">-20</text>
    </g>
  </Plot>
);

const CciAxis = () => (
  <Axis>
    <Plot $height={280} role="img" aria-label="CCI scale">
      <g transform="translate(-1792 -748)" stroke="#fff">
        <path d="M1793 748V1028" strokeWidth="2" />
        <path d="M1794 748.500H1888" />
        <path d="M1887.500 749V1026.500H1794" stroke="#999" fill="none" />
        {range(13).map((k) => (
          <path key={k} d={`M1794 ${cciTick(k) + 0.5}h${k === 1 || k === 11 ? 4 : 2}`} />
        ))}
      </g>
    </Plot>
    <AxisBadge $top={121}>0</AxisBadge>
  </Axis>
);

const SheetTab = ({ label, active }) => (
  <Tab $active={active} role="tab" aria-selected={Boolean(active)}>
    <svg viewBox="0 0 100 20" preserveAspectRatio="none" aria-hidden="true">
      <path
        d={active ? "M0 0L12 19H88L100 0" : "M0 1L12 19H88L100 1Z"}
        fill={active ? "#fff" : "#efefef"}
        stroke="#000"
        vectorEffect="non-scaling-stroke"
      />
    </svg>
    {label}
  </Tab>
);

const LeftTools = () => (
  <SideTools $width={38} $inset={3}>
    <SideGroup>
      <SideButton icon="open" set={sideIcons} />
      <SideButton icon="scales" set={sideIcons} w={26} />
      <SideButton icon="reset" set={sideIcons} h={10} label="RESET" size={7} />
      <SideButton icon="study" set={sideIcons} h={10} label="STUDY" size={7} />
      <SideButton icon="elliott" set={sideIcons} h={11} label="Elliott" size={8} pressed />
      {["up", "down", "left", "right", "space", "narrow", "shorten"].map((name) => (
        <SideButton key={name} icon={name} set={sideIcons} />
      ))}
      <SideButton icon="grid" set={sideIcons} pressed />
      <SideButton icon="lines" set={sideIcons} h={11} label="LINES" size={7} pressed />
      <SideButton icon="gann" set={sideIcons} h={12} label="GANN" size={7} pressed />
      <SideButton icon="fib" set={sideIcons} h={11} label="FIB" size={7} pressed />
      <SideButton icon="cross" set={sideIcons} pressed />
    </SideGroup>
    <SideGroup>
      <SideButton icon="props" set={sideIcons} />
    </SideGroup>
    <SideEnd />
  </SideTools>
);

const RightTools = () => (
  <SideTools $width={31} $inset={5}>
    <SideGroup>
      <SideButton width={23} w={18} icon="cross" set={rightIcons} pressed />
      <SideButton width={23} w={18} icon="pencil" set={rightIcons} />
      <SideButton width={23} w={18} icon="channel" set={rightIcons} />
      <SideButton width={23} label={"FIB\nRET"} />
      <SideButton width={23} label={"FIB\nEXT"} />
      <SideButton width={23} label={"FIB\nTIME"} />
      <SideButton width={23} w={18} h={10} icon="arcs" set={rightIcons} label="FIB" />
      <SideButton width={23} w={18} icon="fan" set={rightIcons} />
      <SideButton width={23} w={18} icon="grid" set={rightIcons} />
      <SideButton width={23} w={18} h={10} icon="ellipse" set={rightIcons} label="ELIPS" size={7} />
      <SideButton width={23} w={18} icon="pitchfork" set={rightIcons} />
      <SideButton width={23} label="PTI" size={11} />
      <SideButton width={23} w={18} icon="table" set={rightIcons} />
      <ToolButton $width={23} $height={22}>
        <Stack>
          <svg width="16" height="9" aria-hidden="true">
            <path d="M0 0h16v4H0z" fill="#ff00ff" />
            <path d="M0 4h16v3H0z" fill="#22e6f0" />
          </svg>
          <PlainText $size={8} $bold>MOB</PlainText>
        </Stack>
      </ToolButton>
      <ToolButton $width={23} $height={22}>
        <Letter>A</Letter>
      </ToolButton>
    </SideGroup>
    <SideGroup>
      {["zoom", "eraser", "shrink", "copy"].map((name) => (
        <SideButton key={name} width={23} w={18} icon={name} set={rightIcons} />
      ))}
    </SideGroup>
    <SideGroup>
      <SideButton width={23} w={18} icon="magnet" set={rightIcons} pressed />
    </SideGroup>
    <SideEnd />
  </SideTools>
);

const App = () => (
  <Window>
    <GlobalStyle />
    <TitleBar>
      <AppIcon viewBox="0 0 20 20" aria-hidden="true">
        <path d="M1 6l6 1 4-2h7v4l-5 2v5l-5-4-7 2z" fill="#0000e0" />
        <path d="M0 15l6-3 4-4 3 1 5-5" fill="none" stroke="#e00020" strokeWidth="1.500" />
      </AppIcon>
      <Title>Advanced GET for TS2000i - [FTSEMIB - SPMIB FUTURES, 15]</Title>
      <WindowButtons>
        <WindowButton $width={37} aria-label="Minimize">
          <svg width="20" height="22"><rect x="1.500" y="13.500" width="17" height="4" fill="#fff" stroke="#445" /></svg>
        </WindowButton>
        <WindowButton $width={36} aria-label="Restore">
          <svg width="20" height="22">
            <path d="M5.500 3.500h13v12h-13z" fill="#fff" stroke="#445" />
            <path d="M1.500 7.500h13v12h-13z" fill="#fff" stroke="#445" />
            <path d="M5.500 11.500h5v4h-5z" fill="#7d94ad" stroke="#445" />
          </svg>
        </WindowButton>
        <WindowButton $width={62} $close aria-label="Close">
          <svg width="22" height="22">
            <path d="M3 5h5l3 4 3-4h5l-5 7 5 6h-5l-3-4-3 4H3l5-6z" fill="#fff" stroke="#533" />
          </svg>
        </WindowButton>
      </WindowButtons>
    </TitleBar>
    <MenuBar>
      <MenuIcon viewBox="0 0 16 20" aria-hidden="true">
        <path d="M7.500 1.500h3v6h3v3h-3v8h-4v-4h-3v-3h3v-10z" fill="#fff" stroke="#000" />
      </MenuIcon>
      {["File", "Page", "Chart", "Tools", "View", "Window", "Help"].map((name) => (
        <MenuButton key={name}>{name}</MenuButton>
      ))}
      <DocumentButtons>
        <DocumentButton aria-label="Minimize chart">
          <svg width="18" height="18"><path d="M6 12h6v2H6z" fill="#66788f" /></svg>
        </DocumentButton>
        <DocumentButton aria-label="Restore chart">
          <svg width="18" height="18" fill="none" stroke="#66788f">
            <path d="M7.500 6V5.500h6v5h-2M7 6h7M5.500 9.500h5v4h-5zM5 9h6" />
          </svg>
        </DocumentButton>
        <DocumentButton aria-label="Close chart">
          <svg width="18" height="18"><path d="M6 6l6 7M12 6l-6 7" stroke="#66788f" strokeWidth="2" /></svg>
        </DocumentButton>
      </DocumentButtons>
    </MenuBar>
    <Toolbars>
      <IconButtons names={["bar", "quotes"]} />
      <IconButtons names={["page", "save", "prev", "next", "cycle", "remove", "cycleAll"]} />
      <IconButtons names={["print", "help", "pointer"]} after={6} />
      <Divider />
      <StudyButtons items={studies} />
      <Divider />
      <StudyButtons items={tools}>
        <ToolButton $width={31} $height={22}>
          <StudyText $size={13}>
            <Tint $color="#0000ff">X</Tint>T<Tint $color="#ff0000">L</Tint>
          </StudyText>
        </ToolButton>
      </StudyButtons>
      <Divider $after={2} />
      <Divider />
      <ButtonGroup $after={6}>
        {periods.map((label) => (
          <ToolButton key={label} $pressed={label === "15"}>
            <PlainText $size={14} $bold>{label}</PlainText>
          </ToolButton>
        ))}
      </ButtonGroup>
      <Divider />
    </Toolbars>
    <Workspace>
      <LeftTools />
      <Charts>
        <Pane>
          <QuoteBar>
            <QuoteValue>12/16/22</QuoteValue>
            <QuoteValue>O: 23710.000</QuoteValue>
            <QuoteValue>23835.000</QuoteValue>
            <QuoteValue><Tint $color="#ff0000">L:</Tint>  23570.000</QuoteValue>
            <QuoteValue>C: 23645.000</QuoteValue>
            <QuoteValue><Tint $color="#ff0000">-1.000</Tint></QuoteValue>
          </QuoteBar>
        </Pane>
        <Pane>
          <PlotColumn>
            <PriceChart />
          </PlotColumn>
          <PriceAxis />
        </Pane>
        <Pane>
          <PlotColumn>
            <CciChart />
            <TabStrip role="tablist">
              <ToolButton $width={20} $height={20} aria-label="Previous tab">
                <svg width="8" height="10"><path d="M6 0v10L1 5z" /></svg>
              </ToolButton>
              <ToolButton $width={21} $height={20} aria-label="Next tab">
                <svg width="8" height="10"><path d="M2 0v10l5-5z" /></svg>
              </ToolButton>
              <SheetTab label="Osc 5,35" />
              <SheetTab label="Osc 16,64" />
              <SheetTab label="CCI 64" active />
              <SheetTab label="ADX/DMI 64" />
            </TabStrip>
          </PlotColumn>
          <CciAxis />
        </Pane>
        <Pane $last>
          <TimeAxis>
            {range(24).map((i) => (
              <Hour key={i}>{hours[i % 3]}</Hour>
            ))}
            <CursorTime>12/09/22 - 12:45</CursorTime>
          </TimeAxis>
          <Corner />
        </Pane>
      </Charts>
      <RightTools />
    </Workspace>
    <StatusBar>
      <StatusCell>Page: 1 - FTSEMIB B</StatusCell>
    </StatusBar>
    <TaskEdge />
  </Window>
);

export default App;
